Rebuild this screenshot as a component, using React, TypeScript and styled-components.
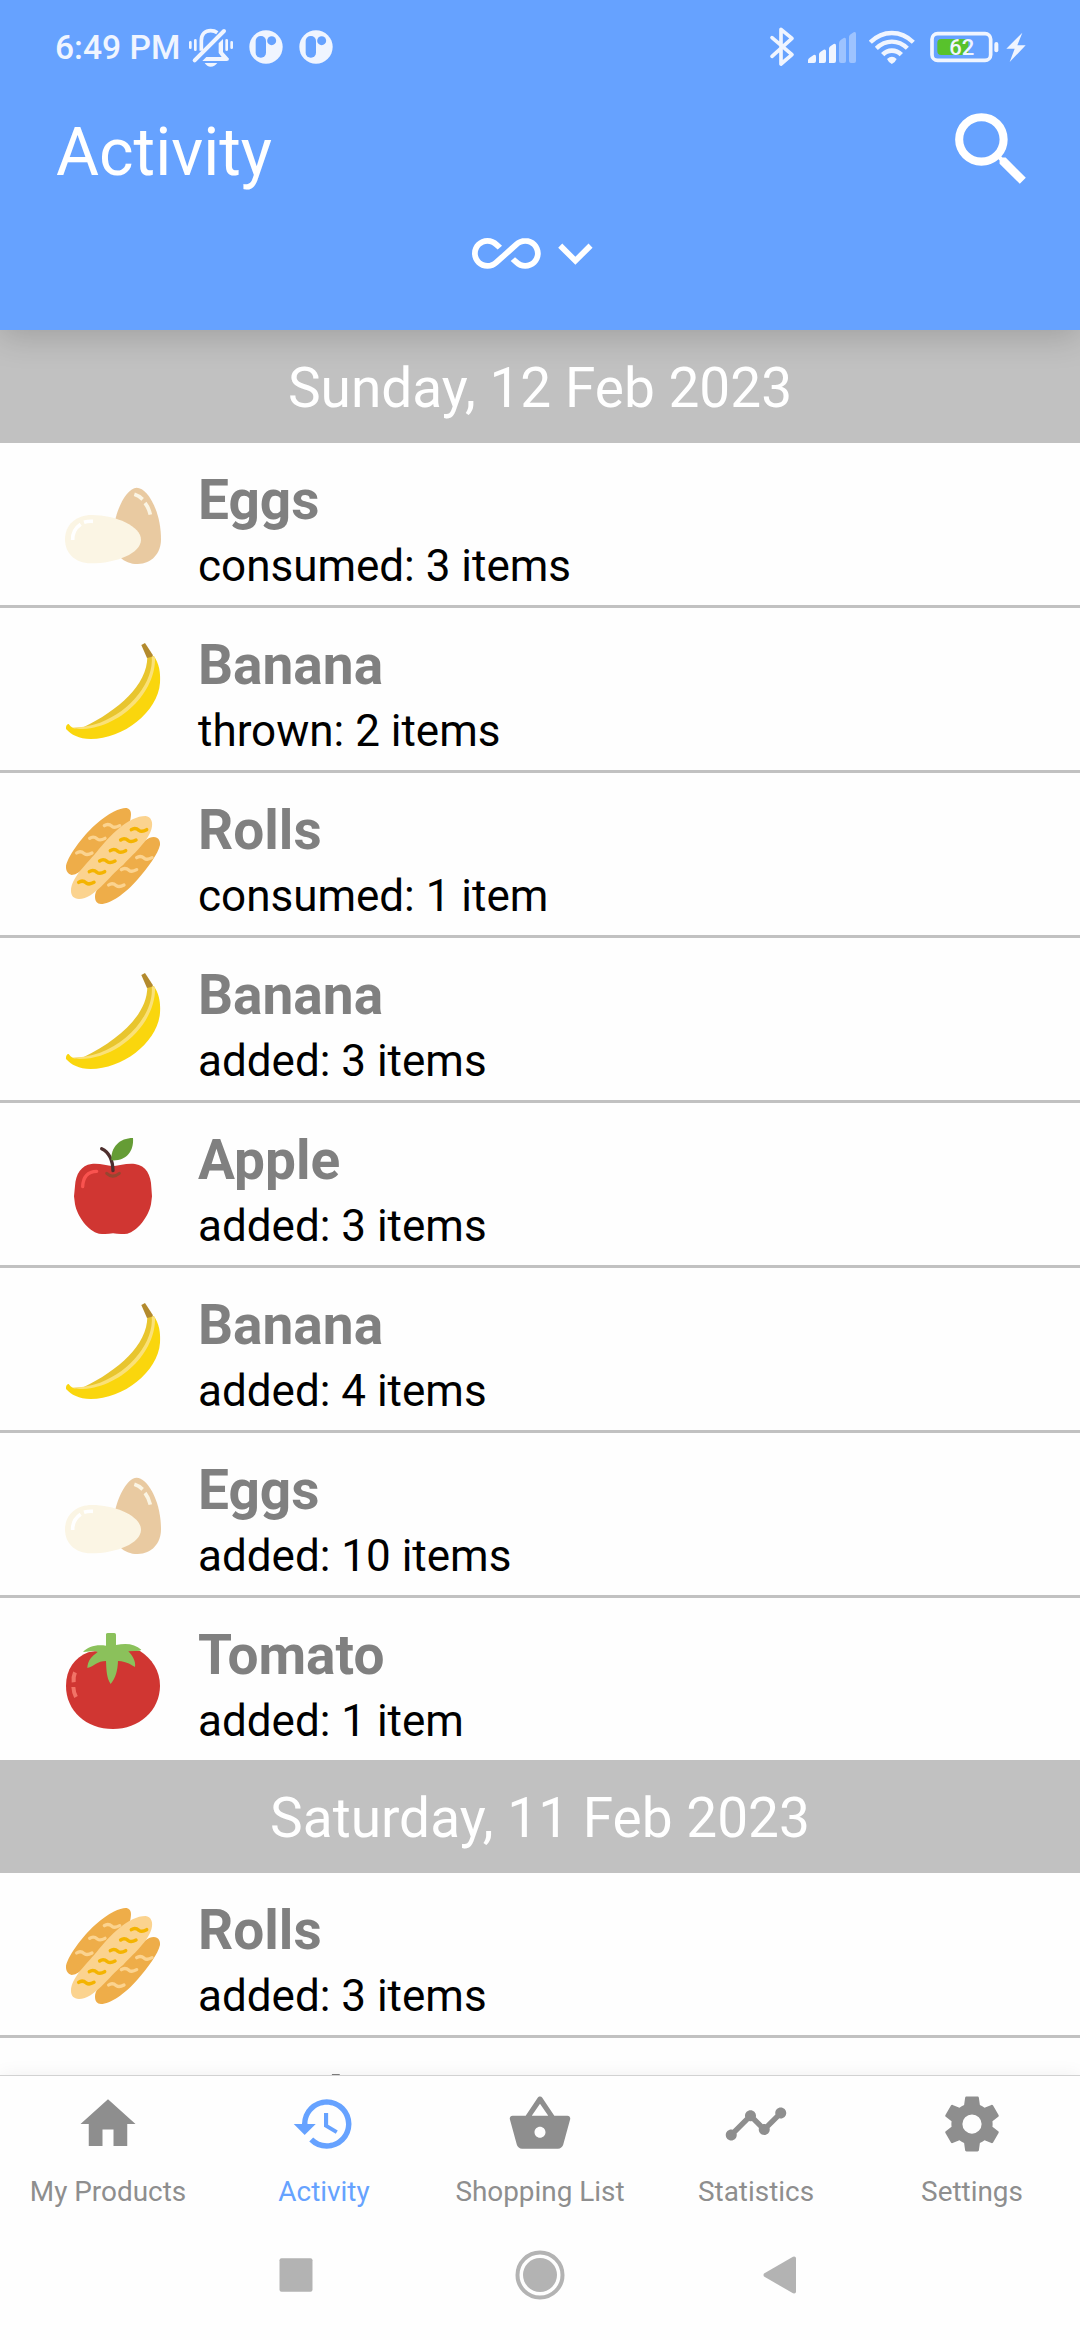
import React from "react";
import styled, { createGlobalStyle } from "styled-components";
import {
  MdAllInclusive,
  MdHistory,
  MdHome,
  MdKeyboardArrowDown,
  MdSearch,
  MdShoppingBasket,
  MdTimeline,
} from "react-icons/md";

const BLUE = "#66a2ff";
const LINE = "#c1c1c1";
const STATUS = "#f0f5ff";

const GlobalStyle = createGlobalStyle`
  * { box-sizing: border-box; }
  body { margin: 0; background: #fefefe; font-family: Roboto, "Liberation Sans", sans-serif; }
`;

const Screen = styled.div`
  width: 1080px;
  height: 2340px;
  display: flex;
  flex-direction: column;
  overflow: hidden;
  background: #fefefe;
`;

const Header = styled.header`
  position: relative;
  z-index: 1;
  flex: none;
  height: 330px;
  display: flex;
  flex-direction: column;
  background: ${BLUE};
  color: #fff;
  box-shadow: 0 6px 32px rgba(0, 0, 0, 0.18);
`;

const StatusBar = styled.div`
  height: 94px;
  flex: none;
  display: flex;
  justify-content: space-between;
  padding: 0 54px 0 55px;
  color: ${STATUS};
`;

const StatusGroup = styled.div`
  display: flex;
`;

const Clock = styled.span`
  width: 133px;
  padding-top: 28px;
  font-size: 33.6px;
  font-weight: 500;
  line-height: 40px;
  white-space: nowrap;
`;

const Glyph = styled.svg<{ $w: number; $gap?: number }>`
  display: block;
  flex: none;
  width: ${(p) => p.$w}px;
  height: 94px;
  margin-left: ${(p) => p.$gap ?? 0}px;
`;

const TitleRow = styled.div`
  height: 116px;
  display: flex;
  justify-content: space-between;
  padding: 0 40px 0 56px;
`;

const Title = styled.h1`
  margin: 20px 0 0;
  font-size: 66px;
  font-weight: 400;
  line-height: 77px;
`;

const SearchButton = styled.button`
  margin: 7px 0 0;
  padding: 0;
  border: 0;
  background: none;
  color: #fff;
  height: 97px;
  font-size: 97px;
  line-height: 0;
`;

const RangePicker = styled.div`
  display: flex;
  justify-content: center;
  padding: 9px 0 0 2px;
  font-size: 68.75px;
  line-height: 0;
`;

const List = styled.main`
  flex: none;
  height: 1745px;
  overflow: hidden;
`;

const DateHeader = styled.h2`
  margin: 0;
  height: 110px;
  padding-top: 26px;
  background: ${LINE};
  color: #fff;
  text-align: center;
  font-size: 55px;
  font-weight: 400;
  line-height: 64px;
`;

const Row = styled.div`
  height: 165px;
  display: flex;
  align-items: flex-start;
  border-top: 3px solid ${LINE};
  padding: 0 0 0 60px;
`;

const Picture = styled.svg`
  display: block;
  flex: none;
  width: 105px;
  height: 105px;
  margin: 32px 33px 0 0;
`;

const Info = styled.div`
  display: flex;
  flex-direction: column;
  gap: 8px;
  padding-top: 25px;
`;

const Name = styled.div`
  color: #808080;
  font-size: 55px;
  font-weight: 700;
  line-height: 64px;
`;

const Detail = styled.div`
  color: #000;
  font-size: 44px;
  line-height: 52px;
`;

const TabBar = styled.nav`
  position: relative;
  z-index: 1;
  flex: none;
  height: 163px;
  display: flex;
  border-top: 1px solid #d2d2d2;
  background: #fefefe;
  box-shadow: 0 0 18px rgba(0, 0, 0, 0.06);
`;

const Tab = styled.a<{ $active?: boolean }>`
  flex: 1 1 0;
  min-width: 0;
  display: flex;
  flex-direction: column;
  align-items: center;
  padding-top: 15px;
  color: ${(p) => (p.$active ? BLUE : "#8e8e8e")};
  font-size: 66px;

  svg {
    display: block;
    flex: none;
    width: 66px;
    height: 66px;
  }
`;

const TabLabel = styled.span`
  margin-top: 19px;
  font-size: 27.9px;
  line-height: 32px;
  white-space: nowrap;
`;

const SystemBar = styled.div`
  position: relative;
  z-index: 1;
  flex: 1;
  display: flex;
  align-items: center;
  padding: 0 0 28px 279px;
  background: #fefefe;
`;

const SysIcon = styled.svg<{ $w: number; $h: number; $gap?: number }>`
  display: block;
  flex: none;
  width: ${(p) => p.$w}px;
  height: ${(p) => p.$h}px;
  margin-left: ${(p) => p.$gap ?? 0}px;
  fill: #b3b3b3;
`;

const Eggs = () => (
  <Picture viewBox="180 105 315 315">
    <path d="M410 143C442 143 483 212 483 298C483 340 455 372 413 372C370 372 340 344 340 290C340 215 380 143 410 143Z" fill="#e9caa1" />
    <path d="M275 225C350 225 423 260 423 299C423 339 350 370 272 370C225 370 195 340 195 298C195 254 229 225 275 225Z" fill="#fbf5e4" />
    <g fill="none" stroke="#fff" strokeWidth="11">
      <path d="M218 300Q217 270 242 253" />
      <path d="M252 247Q264 243 279 244" />
    </g>
    <g fill="none" stroke="#fbf5e4" strokeWidth="11">
      <path d="M403 163Q416 167 428 178" />
      <path d="M435 189Q446 203 451 224" />
    </g>
  </Picture>
);

const Banana = () => (
  <Picture viewBox="180 90 315 315">
    <path d="M442 140C442 225 355 300 250 352L215 354L280 368L390 320L466 205L461 138Z" fill="#e8c52e" />
    <path d="M461 138C478 160 482 190 480 218C474 305 370 387 272 387C236 387 214 374 198 357C197 348 201 341 206 342C212 352 220 355 232 357C330 355 460 250 461 138Z" fill="#fad60d" />
    <path d="M455 139L465 140C470 245 360 357 238 357L214 353C240 353 270 348 300 338C390 305 463 215 455 139Z" fill="#fae178" />
    <path d="M424 105L435 99L459 136L456 140L441 144Z" fill="#b38a2d" />
  </Picture>
);

const squiggle = (x: number, y: number) =>
  `M${x} ${y}C${x + 10} ${y - 7} ${x + 16} ${y - 4} ${x + 23} ${y + 2}C${x + 30} ${y + 7} ${x + 37} ${y + 5} ${x + 46} ${y}`;

const Rolls = () => (
  <Picture viewBox="180 105 315 315">
    <g fill="#eead49">
      <path d="M198 292C197 266 250 195 286 164C330 125 365 112 380 114C396 118 394 135 391 149C384 176 345 208 300 245C270 270 245 312 215 315C205 313 198 304 198 292Z" />
      <path d="M285 380C286 350 325 315 365 285C400 253 430 202 461 201C476 202 481 213 480 225C474 252 445 291 412 329C376 371 330 402 303 402C291 401 285 393 285 380Z" />
    </g>
    <path d="M213 362C214 325 252 290 290 246C330 196 385 138 437 138C453 140 458 155 456 169C452 204 410 244 370 284C325 320 285 385 237 387C221 386 213 377 213 362Z" fill="#fbd38f" />
    <g fill="none" stroke="#fbd38f" strokeWidth="10" strokeLinecap="round">
      <path d={squiggle(313, 167)} />
      <path d={squiggle(269, 205)} />
      <path d={squiggle(230, 249)} />
      <path d={squiggle(410, 263)} />
      <path d={squiggle(364, 299)} />
      <path d={squiggle(326, 345)} />
    </g>
    <g fill="none" stroke="#f4b400" strokeWidth="10.5" strokeLinecap="round">
      <path d={squiggle(394, 179)} />
      <path d={squiggle(362, 210)} />
      <path d={squiggle(331, 242)} />
      <path d={squiggle(299, 273)} />
      <path d={squiggle(268, 305)} />
      <path d={squiggle(236, 337)} />
    </g>
  </Picture>
);

const Apple = () => (
  <Picture viewBox="180 105 315 315">
    <path d="M274 192C301 190 318 196 339 199C360 196 377 190 405 192C438 196 453 225 454 262L456 289L453 313C446 350 412 394 382 401Q360 404 339 400Q318 404 297 401C265 394 232 350 225 313L222 289L225 258C227 222 244 196 274 192Z" fill="#d03632" />
    <path d="M320 220Q338 237 358 220" fill="none" stroke="#964630" strokeWidth="9" strokeLinecap="round" />
    <path d="M305 146C326 156 338 175 339 212" fill="none" stroke="#4e2f2e" strokeWidth="10" strokeLinecap="round" />
    <path d="M334 181C332 141 359 114 399 114C402 155 378 184 334 181Z" fill="#659c35" />
    <path d="M248 260Q250 215 290 214" fill="none" stroke="#f9534f" strokeWidth="10" strokeLinecap="round" />
  </Picture>
);

const Tomato = () => (
  <Picture viewBox="180 120 315 315">
    <path d="M265 187C300 178 390 178 420 183C455 205 480 242 480 287C480 362 416 417 339 417C258 417 198 362 198 288C198 239 223 203 265 187Z" fill="#d03632" />
    <path d="M318 132Q319 129 324 129H343Q348 129 348 134V165C380 158 405 162 424 179Q420 184 405 183L385 184C398 198 408 214 405 231C395 227 383 214 354 213C353 240 348 263 332 282C319 264 319 235 318 213C292 213 283 229 262 234C263 212 275 199 293 186L284 183L249 186C263 170 289 162 318 167Z" fill="#8bc15b" />
    <g fill="none" stroke="#f17367" strokeWidth="12">
      <path d="M225 247Q219 260 221 277" />
      <path d="M220 291Q221 308 228 321" />
    </g>
  </Picture>
);

const Cog = () => (
  <svg viewBox="0 0 24 24" fill="currentColor">
    <path d="M12,15.5A3.5,3.5 0 0,1 8.5,12A3.5,3.5 0 0,1 12,8.5A3.5,3.5 0 0,1 15.5,12A3.5,3.5 0 0,1 12,15.5M19.43,12.97C19.47,12.65 19.5,12.33 19.5,12C19.5,11.67 19.47,11.34 19.43,11L21.54,9.37C21.73,9.22 21.78,8.95 21.66,8.73L19.66,5.27C19.54,5.05 19.27,4.96 19.05,5.05L16.56,6.05C16.04,5.66 15.5,5.32 14.87,5.07L14.5,2.42C14.46,2.18 14.25,2 14,2H10C9.75,2 9.54,2.18 9.5,2.42L9.13,5.07C8.5,5.32 7.96,5.66 7.44,6.05L4.95,5.05C4.73,4.96 4.46,5.05 4.34,5.27L2.34,8.73C2.21,8.95 2.27,9.22 2.46,9.37L4.57,11C4.53,11.34 4.5,11.67 4.5,12C4.5,12.33 4.53,12.65 4.57,12.97L2.46,14.63C2.27,14.78 2.21,15.05 2.34,15.27L4.34,18.73C4.46,18.95 4.73,19.03 4.95,18.95L7.44,17.94C7.96,18.34 8.5,18.68 9.13,18.93L9.5,21.58C9.54,21.82 9.75,22 10,22H14C14.25,22 14.46,21.82 14.5,21.58L14.87,18.93C15.5,18.67 16.04,18.34 16.56,17.94L19.05,18.95C19.27,19.03 19.54,18.95 19.66,18.73L21.66,15.27C21.78,15.05 21.73,14.78 21.54,14.63L19.43,12.97Z" />
  </svg>
);

const SilentBell = () => (
  <Glyph $w={45} viewBox="564 0 135 282" fill="none" stroke={STATUS}>
    <path d="M604 152V122C604 102 616 92 632 92Q644 92 652 98" strokeWidth="11" />
    <path d="M584 181L672 93" strokeWidth="12" strokeLinecap="round" />
    <path d="M669 117V156L687 176Q687 183 680 183H607L619 171H665L656 159V130Z" fill={STATUS} stroke="none" />
    <path d="M614 189H652Q644 200 632 200Q621 200 614 189Z" fill={STATUS} stroke="none" />
    <g strokeWidth="8" strokeLinecap="round">
      <path d="M571 127V143M586 121V149M680 121V149M695 127V143" />
    </g>
  </Glyph>
);

const Badge = ({ gap }: { gap: number }) => (
  <Glyph $w={34} $gap={gap} viewBox="747 0 102 282">
    <circle cx="798" cy="141" r="50" fill={STATUS} />
    <rect x="767" y="108" width="31" height="65" rx="15" fill={BLUE} />
    <circle cx="815" cy="122" r="13.5" fill={BLUE} />
  </Glyph>
);

const Bluetooth = () => (
  <Glyph $w={26} viewBox="87 0 78 282" fill="none" stroke={STATUS} strokeWidth="11" strokeLinejoin="round" strokeLinecap="round">
    <path d="M96 113L156 164L123 192V88L156 115L96 169" />
  </Glyph>
);

const Signal = () => (
  <Glyph $w={48} $gap={13} viewBox="204 0 144 282" fill={STATUS}>
    <path d="M204 189V180Q205 175 209 173L221 165Q228 162 228 170V183Q228 189 222 189Z" />
    <path d="M237 189V162Q238 157 242 155L251 149Q258 146 258 154V183Q258 189 252 189Z" />
    <path d="M267 189V145Q268 140 272 138L281 132Q288 129 288 137V183Q288 189 282 189Z" />
    <g opacity="0.4">
      <path d="M297 183V129Q298 123 302 120L311 114Q318 111 318 119V183Q318 189 312 189H303Q297 189 297 183Z" />
      <path d="M327 183V110Q328 105 332 103L341 97Q348 94 348 102V183Q348 189 342 189H333Q327 189 327 183Z" />
    </g>
  </Glyph>
);

const Wifi = () => (
  <Glyph $w={46} $gap={13} viewBox="387 0 138 282" fill="none" stroke={STATUS} strokeWidth="13">
    <path d="M391 127Q419 99 455.500 99Q492 99 520 127" />
    <path d="M409 145Q430 125 455.500 125Q482 125 502 145" />
    <path d="M428 164Q440 152 455.500 152Q472 152 484 164" strokeWidth="14" />
    <path d="M441 177Q456 163 470 177Q465 188 455.500 192Q446 188 441 177Z" fill={STATUS} stroke="none" />
  </Glyph>
);

const Battery = () => (
  <Glyph $w={69} $gap={15} viewBox="569 0 207 282">
    <rect x="575" y="101" width="176" height="80" rx="17" fill="none" stroke={STATUS} strokeWidth="11" />
    <path d="M603 117H684V165H603Q591 165 591 153V129Q591 117 603 117Z" fill="#58c22c" />
    <rect x="762" y="126" width="12" height="31" rx="6" fill={STATUS} />
    <text x="664" y="166" textAnchor="middle" fontFamily="Roboto, sans-serif" fontWeight="500" fontSize="66" fill={STATUS}>
      62
    </text>
  </Glyph>
);

const Bolt = () => (
  <Glyph $w={20} $gap={7} viewBox="797 0 60 282" fill={STATUS}>
    <path d="M846 98L798 146H823L808 186L856 136H831Z" />
  </Glyph>
);

type Entry = { picture: React.FC; name: string; detail: string };

const days: { date: string; entries: Entry[] }[] = [
  {
    date: "Sunday, 12 Feb 2023",
    entries: [
      { picture: Eggs, name: "Eggs", detail: "consumed: 3 items" },
      { picture: Banana, name: "Banana", detail: "thrown: 2 items" },
      { picture: Rolls, name: "Rolls", detail: "consumed: 1 item" },
      { picture: Banana, name: "Banana", detail: "added: 3 items" },
      { picture: Apple, name: "Apple", detail: "added: 3 items" },
      { picture: Banana, name: "Banana", detail: "added: 4 items" },
      { picture: Eggs, name: "Eggs", detail: "added: 10 items" },
      { picture: Tomato, name: "Tomato", detail: "added: 1 item" },
    ],
  },
  {
    date: "Saturday, 11 Feb 2023",
    entries: [{ picture: Rolls, name: "Rolls", detail: "added: 3 items" }],
  },
];

const PartialRow = styled(Row)`
  padding: 1px 0 0 198px;
`;

export default function App() {
  return (
    <Screen>
      <GlobalStyle />
      <Header>
        <StatusBar>
          <StatusGroup>
            <Clock>6:49 PM</Clock>
            <SilentBell />
            <Badge gap={16} />
            <Badge gap={16} />
          </StatusGroup>
          <StatusGroup>
            <Bluetooth />
            <Signal />
            <Wifi />
            <Battery />
            <Bolt />
          </StatusGroup>
        </StatusBar>
        <TitleRow>
          <Title>Activity</Title>
          <SearchButton aria-label="Search">
            <MdSearch />
          </SearchButton>
        </TitleRow>
        <RangePicker>
          <MdAllInclusive />
          <MdKeyboardArrowDown />
        </RangePicker>
      </Header>
      <List>
        {days.map((day) => (
          <section key={day.date}>
            <DateHeader>{day.date}</DateHeader>
            {day.entries.map(({ picture: Pic, name, detail }, i) => (
              <Row key={i}>
                <Pic />
                <Info>
                  <Name>{name}</Name>
                  <Detail>{detail}</Detail>
                </Info>
              </Row>
            ))}
          </section>
        ))}
        <PartialRow>
          <Info>
            <Name>Bread</Name>
          </Info>
        </PartialRow>
      </List>
      <TabBar>
        <Tab>
          <MdHome />
          <TabLabel>My Products</TabLabel>
        </Tab>
        <Tab $active>
          <MdHistory />
          <TabLabel>Activity</TabLabel>
        </Tab>
        <Tab>
          <MdShoppingBasket />
          <TabLabel>Shopping List</TabLabel>
        </Tab>
        <Tab>
          <MdTimeline />
          <TabLabel>Statistics</TabLabel>
        </Tab>
        <Tab>
          <Cog />
          <TabLabel>Settings</TabLabel>
        </Tab>
      </TabBar>
      <SystemBar>
        <SysIcon $w={34} $h={34} viewBox="0 0 34 34">
          <rect x="0.500" y="0.300" width="33" height="33.400" rx="2" />
        </SysIcon>
        <SysIcon $w={50} $h={50} $gap={202} viewBox="0 0 50 50">
          <circle cx="25" cy="25" r="22.500" fill="none" stroke="#b3b3b3" strokeWidth="4" />
          <circle cx="25" cy="25" r="17" />
        </SysIcon>
        <SysIcon $w={34} $h={38} $gap={198} viewBox="0 0 34 38">
          <path d="M1 17.500L30 0.700Q33 0 33 2.500V35.500Q33 38 30 37.300L1 20.500Q0 19 1 17.500Z" />
        </SysIcon>
      </SystemBar>
    </Screen>
  );
}
